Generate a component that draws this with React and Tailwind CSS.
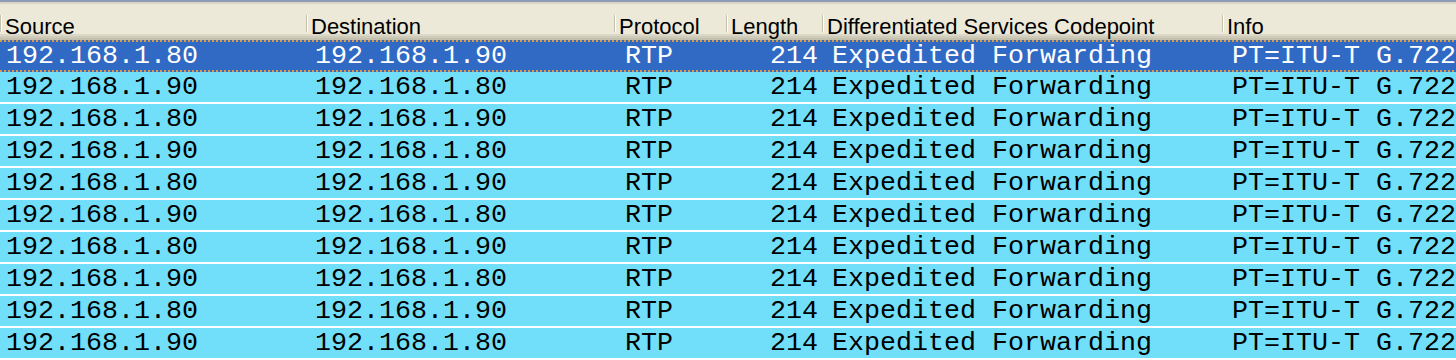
import React from "react";

const GRID = "grid grid-cols-[306px_308px_112px_96px_400px_234px]";

const headers = [
  "Source",
  "Destination",
  "Protocol",
  "Length",
  "Differentiated Services Codepoint",
  "Info",
];

const rows = Array.from({ length: 10 }, (_, i) => ({
  src: i % 2 === 0 ? "192.168.1.80" : "192.168.1.90",
  dst: i % 2 === 0 ? "192.168.1.90" : "192.168.1.80",
  proto: "RTP",
  len: "214",
  dscp: "Expedited Forwarding",
  info: "PT=ITU-T G.722",
}));

function HeaderCell({ label }) {
  return (
    <div className="flex items-start overflow-hidden whitespace-nowrap">
      <span className="mt-[11px] h-[17px] w-[2px] shrink-0 bg-[linear-gradient(to_right,#c4c1b1_1px,#ffffff_1px)]" />
      <span className="ml-[3px] mt-[11px] leading-[24px] text-[22px] text-black">
        {label}
      </span>
    </div>
  );
}

function Row({ r, selected }) {
  const text = selected ? "text-white" : "text-black";
  const cell = "overflow-hidden whitespace-nowrap leading-[30px] h-[30px]";
  return (
    <div
      className={
        selected
          ? "relative h-[32px] bg-[#316ac5] pt-[1px]"
          : "h-[32px] bg-[#71dffa] border-b-2 border-white"
      }
    >
      <div className={`${GRID} ${text} font-['Liberation_Mono',monospace] text-[26.67px]`}>
        <div className={`${cell} pl-[6px]`}>{r.src}</div>
        <div className={`${cell} pl-[9px]`}>{r.dst}</div>
        <div className={`${cell} pl-[11px]`}>{r.proto}</div>
        <div className={`${cell} pr-[4px] text-right`}>{r.len}</div>
        <div className={`${cell} pl-[10px]`}>{r.dscp}</div>
        <div className={`${cell} pl-[10px]`}>{r.info}</div>
      </div>
      {selected && (
        <>
          <div className="absolute left-0 right-0 top-0 h-[2px] bg-[repeating-linear-gradient(90deg,#d99b45_0px,#d99b45_2px,transparent_2px,transparent_4px)]" />
          <div className="absolute left-0 right-0 bottom-0 h-[2px] bg-[repeating-linear-gradient(90deg,#d99b45_0px,#d99b45_2px,transparent_2px,transparent_4px)]" />
        </>
      )}
    </div>
  );
}

export default function App() {
  return (
    <div className="h-[360px] w-[1456px] overflow-hidden bg-[#71dffa] font-['Liberation_Sans',Arial,sans-serif]">
      <div className="h-[2px] bg-[#8d9db5]" />
      <div className="h-[2px] bg-[#d9d6c9]" />
      <div
        className={`${GRID} h-[36px] bg-[linear-gradient(to_bottom,#ece9d8_30px,#dcd8c7_30px,#dcd8c7_32px,#cfcbba_32px,#cfcbba_34px,#c4c0ae_34px)]`}
      >
        {headers.map((h) => (
          <HeaderCell key={h} label={h} />
        ))}
      </div>
      {rows.map((r, i) => (
        <Row key={i} r={r} selected={i === 0} />
      ))}
    </div>
  );
}
